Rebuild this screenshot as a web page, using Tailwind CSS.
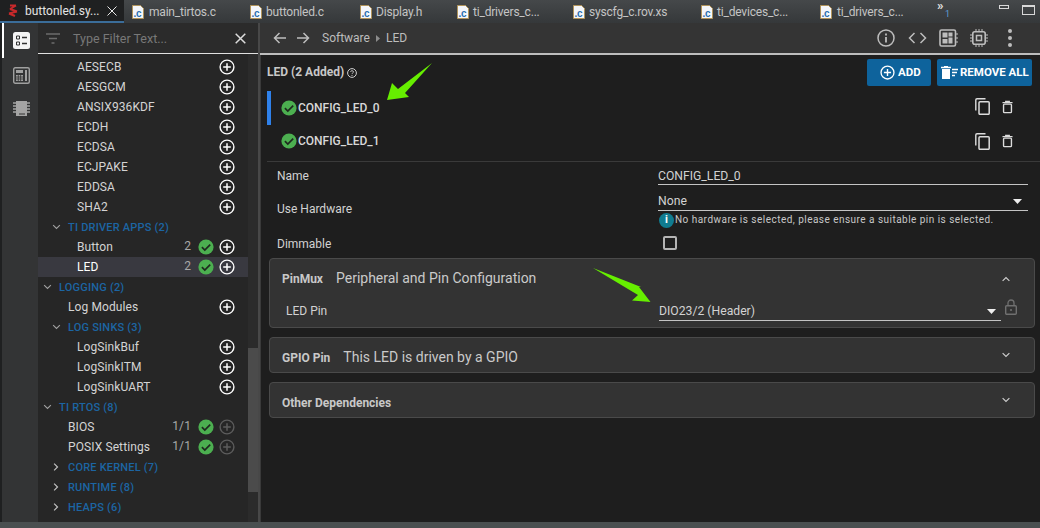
<!DOCTYPE html>
<html>

<head>
  <meta charset="UTF-8">
  <title>buttonled.syscfg</title>
  <script src="https://cdn.jsdelivr.net/npm/@tailwindcss/browser@4"></script>
</head>

<body class="w-[1040px] h-[528px] overflow-hidden bg-[#1e1e1e] font-['Roboto',sans-serif] text-[12px] text-[#d2d2d2] relative">
  <svg class="hidden">
    <symbol id="plus" viewBox="0 0 16 16">
      <circle cx="8" cy="8" r="6.9" fill="none" stroke="currentColor" stroke-width="1.4" />
      <path d="M8 4.2v7.6M4.2 8h7.6" fill="none" stroke="currentColor" stroke-width="1.5" />
    </symbol>
    <symbol id="ok" viewBox="0 0 16 16">
      <circle cx="8" cy="8" r="7.6" fill="#4caf50" />
      <path d="M3.9 8.2l2.9 2.9 5.4-5.4" fill="none" stroke="#1e2a1e" stroke-width="1.7" />
    </symbol>
    <symbol id="cfile" viewBox="0 0 12 14">
      <path d="M.5.5h8l3 3v10h-11z" fill="#f4f6fa" stroke="#b0935a" />
      <text x="1.5" y="11.5" font-size="10" font-weight="700" font-family="Liberation Sans" fill="#2a6fb0">.c</text>
    </symbol>
    <symbol id="copy" viewBox="0 0 15 17">
      <path d="M10.500 .8H2C1.300 .8 .8 1.300 .8 2V12.500" fill="none" stroke="currentColor" stroke-width="1.400" />
      <rect x="4" y="3.800" width="10.200" height="12.500" rx="1" fill="none" stroke="currentColor" stroke-width="1.500" />
    </symbol>
    <symbol id="trash" viewBox="0 0 12 14">
      <path d="M.5 2.2h11M4 2V.8h4V2" fill="none" stroke="currentColor" stroke-width="1.3" />
      <rect x="1.7" y="3.8" width="8.6" height="9.4" rx="1" fill="none" stroke="currentColor" stroke-width="1.5" />
    </symbol>
    <symbol id="down" viewBox="0 0 12 8">
      <path d="M1.5 1.5L6 6l4.5-4.5" fill="none" stroke="currentColor" stroke-width="1.5" />
    </symbol>
    <symbol id="right" viewBox="0 0 8 12">
      <path d="M1.5 1.5L6 6l-4.5 4.5" fill="none" stroke="currentColor" stroke-width="1.6" />
    </symbol>
  </svg>

  <!-- Editor tabs -->
  <div class="flex h-[23px] bg-gradient-to-b from-[#45484a] to-[#35383a] text-[#c4c4c4] tracking-[-.2px]">
    <div class="w-[124px] shrink-0 flex items-center pl-[7px] bg-[#1f2021] border-b-2 border-[#3b6d99] tracking-normal">
      <svg class="w-[12px] h-[13px] shrink-0" viewBox="0 0 12 13">
        <path d="M3 1.5h6M9 1.5L3 5M3 5l7 2.5M10 7.5L2 9.5M2 9.5l6 2.5" fill="none" stroke="#c8292b" stroke-width="2" />
      </svg>
      <span class="ml-[6px] w-[76px] whitespace-nowrap text-[#e4e4e4]">buttonled.sy...</span>
      <svg class="w-[10px] h-[10px] ml-[6px]" viewBox="0 0 10 10">
        <path d="M.5.5l9 9M9.5.5l-9 9" stroke="#e8e8e8" fill="none" />
      </svg>
    </div>
    <div class="w-[118px] shrink-0 flex items-center pl-[8px] gap-[5px]"><svg class="w-[12px] h-[14px] shrink-0"><use href="#cfile" /></svg>main_tirtos.c</div>
    <div class="w-[110px] shrink-0 flex items-center pl-[8px] gap-[4px]"><svg class="w-[12px] h-[14px] shrink-0"><use href="#cfile" /></svg>buttonled.c</div>
    <div class="w-[97px] shrink-0 flex items-center pl-[8px] gap-[4px]"><svg class="w-[12px] h-[14px] shrink-0"><use href="#cfile" /></svg>Display.h</div>
    <div class="w-[116px] shrink-0 flex items-center pl-[8px] gap-[4px]"><svg class="w-[12px] h-[14px] shrink-0"><use href="#cfile" /></svg>ti_drivers_c...</div>
    <div class="w-[128px] shrink-0 flex items-center pl-[8px] gap-[4px]"><svg class="w-[12px] h-[14px] shrink-0"><use href="#cfile" /></svg>syscfg_c.rov.xs</div>
    <div class="w-[119px] shrink-0 flex items-center pl-[8px] gap-[4px]"><svg class="w-[12px] h-[14px] shrink-0"><use href="#cfile" /></svg>ti_devices_c...</div>
    <div class="w-[125px] shrink-0 flex items-center pl-[8px] gap-[5px]"><svg class="w-[12px] h-[14px] shrink-0"><use href="#cfile" /></svg>ti_drivers_c...</div>
    <div class="w-[62px] shrink-0 relative">
      <span class="absolute left-0 top-0 text-[13px] leading-[12px] font-bold text-[#e0e0e0]">»</span>
      <span class="absolute left-[8px] top-[8px] text-[9px] leading-[12px] text-[#5b9bd5]">1</span>
    </div>
    <div class="flex items-start pt-[5px] gap-[13px]">
      <div class="w-[10px] h-[4px] border border-[#d8d8d8]"></div>
      <div class="w-[13px] h-[10px] border border-[#d8d8d8] border-t-2"></div>
    </div>
  </div>

  <div class="flex h-[499px]">
    <!-- Activity bar -->
    <div class="w-[38px] shrink-0 pl-[2px] bg-[#1f2021]">
      <div class="h-full bg-[#333435] flex flex-col relative">
        <div class="h-[35px] w-[2px] bg-white"></div>
        <svg class="absolute left-[11px] top-[9px] w-[17px] h-[17px]" viewBox="0 0 17 17">
          <rect width="17" height="17" rx="2.5" fill="#f4f4f4" />
          <path d="M3.5 4h3v3h-3zM3.5 10h3v3h-3z" fill="none" stroke="#333" />
          <path d="M9 5.5h5M9 11.5h5" stroke="#333" stroke-width="1.5" />
        </svg>
        <svg class="absolute left-[11px] top-[44px] w-[17px] h-[17px]" viewBox="0 0 17 17">
          <rect x=".7" y=".7" width="15.6" height="15.6" rx="1.5" fill="none" stroke="#a0a0a0" stroke-width="1.4" />
          <path d="M3 3h7v3H3zM3 8h7v6H3zM12 3h2v11h-2z" fill="#a0a0a0" />
          <path d="M5.3 8v6M7.6 8v6M3 10h7M3 12h7" stroke="#333" stroke-width=".8" />
        </svg>
        <svg class="absolute left-[11px] top-[77px] w-[17px] h-[17px]" viewBox="0 0 17 17">
          <path d="M3 1h11v15H3z" fill="#a4a4a4" />
          <path d="M0 3h3M0 6h3M0 9h3M0 12h3M14 3h3M14 6h3M14 9h3M14 12h3" stroke="#a4a4a4" stroke-width="1.4" />
          <path d="M7 13v2M9 13v2M11 13v2" stroke="#333" />
        </svg>
      </div>
    </div>

    <!-- Sidebar -->
    <div class="w-[220px] shrink-0 flex flex-col bg-[#262626]">
      <div class="h-[31px] shrink-0 flex items-center bg-[#2b2b2b] border-b border-[#e0e0e0] pl-[8px] pr-[12px]">
        <svg class="w-[14px] h-[11px] shrink-0" viewBox="0 0 14 11">
          <path d="M0 1h14M3 5.500h8M5.500 10h3" stroke="#6c6c6c" stroke-width="1.4" fill="none" />
        </svg>
        <span class="ml-[13px] mt-[2px] text-[12.500px] text-[#787878]">Type Filter Text...</span>
        <svg class="ml-auto w-[11px] h-[11px]" viewBox="0 0 11 11">
          <path d="M.7.7l9.600 9.600M10.300.7l-9.600 9.600" stroke="#dcdcdc" stroke-width="1.500" fill="none" />
        </svg>
      </div>
      <div class="flex-1 flex min-h-0">
        <div class="w-[210px] overflow-hidden pt-[3px] text-[#d4d4d4] tracking-[.1px]">
          <div class="h-5 flex items-center pl-[39px] pr-[13px]"><span>AESECB</span><svg class="ml-auto w-[16px] h-[16px] text-white"><use href="#plus" /></svg></div>
          <div class="h-5 flex items-center pl-[39px] pr-[13px]"><span>AESGCM</span><svg class="ml-auto w-[16px] h-[16px] text-white"><use href="#plus" /></svg></div>
          <div class="h-5 flex items-center pl-[39px] pr-[13px]"><span>ANSIX936KDF</span><svg class="ml-auto w-[16px] h-[16px] text-white"><use href="#plus" /></svg></div>
          <div class="h-5 flex items-center pl-[39px] pr-[13px]"><span>ECDH</span><svg class="ml-auto w-[16px] h-[16px] text-white"><use href="#plus" /></svg></div>
          <div class="h-5 flex items-center pl-[39px] pr-[13px]"><span>ECDSA</span><svg class="ml-auto w-[16px] h-[16px] text-white"><use href="#plus" /></svg></div>
          <div class="h-5 flex items-center pl-[39px] pr-[13px]"><span>ECJPAKE</span><svg class="ml-auto w-[16px] h-[16px] text-white"><use href="#plus" /></svg></div>
          <div class="h-5 flex items-center pl-[39px] pr-[13px]"><span>EDDSA</span><svg class="ml-auto w-[16px] h-[16px] text-white"><use href="#plus" /></svg></div>
          <div class="h-5 flex items-center pl-[39px] pr-[13px]"><span>SHA2</span><svg class="ml-auto w-[16px] h-[16px] text-white"><use href="#plus" /></svg></div>

          <div class="h-5 flex items-center pl-[14px] font-medium text-[11px] tracking-[.2px] text-[#1c65a3]"><svg class="w-[9px] h-[6px] mr-[7px] text-[#a0a0a0]"><use href="#down" /></svg><span class="mt-[2px]">TI DRIVER APPS (2)</span></div>
          <div class="h-5 flex items-center pl-[39px] pr-[13px]"><span>Button</span><span class="ml-auto text-[#a8a8a8] -mt-[2px]">2</span><svg class="ml-[7px] w-[16px] h-[16px]"><use href="#ok" /></svg><svg class="ml-[5px] w-[16px] h-[16px] text-white"><use href="#plus" /></svg></div>
          <div class="h-5 flex items-center pl-[39px] pr-[13px] bg-[#393940] text-white"><span>LED</span><span class="ml-auto text-[#a8a8a8] -mt-[2px]">2</span><svg class="ml-[7px] w-[16px] h-[16px]"><use href="#ok" /></svg><svg class="ml-[5px] w-[16px] h-[16px] text-white"><use href="#plus" /></svg></div>

          <div class="h-5 flex items-center pl-[5px] font-medium text-[11px] tracking-[.2px] text-[#1c65a3]"><svg class="w-[9px] h-[6px] mr-[7px] text-[#a0a0a0]"><use href="#down" /></svg><span class="mt-[2px]">LOGGING (2)</span></div>
          <div class="h-5 flex items-center pl-[30px] pr-[13px]"><span>Log Modules</span><svg class="ml-auto w-[16px] h-[16px] text-white"><use href="#plus" /></svg></div>
          <div class="h-5 flex items-center pl-[14px] font-medium text-[11px] tracking-[.2px] text-[#1c65a3]"><svg class="w-[9px] h-[6px] mr-[7px] text-[#a0a0a0]"><use href="#down" /></svg><span class="mt-[2px]">LOG SINKS (3)</span></div>
          <div class="h-5 flex items-center pl-[39px] pr-[13px]"><span>LogSinkBuf</span><svg class="ml-auto w-[16px] h-[16px] text-white"><use href="#plus" /></svg></div>
          <div class="h-5 flex items-center pl-[39px] pr-[13px]"><span>LogSinkITM</span><svg class="ml-auto w-[16px] h-[16px] text-white"><use href="#plus" /></svg></div>
          <div class="h-5 flex items-center pl-[39px] pr-[13px]"><span>LogSinkUART</span><svg class="ml-auto w-[16px] h-[16px] text-white"><use href="#plus" /></svg></div>

          <div class="h-5 flex items-center pl-[5px] font-medium text-[11px] tracking-[.2px] text-[#1c65a3]"><svg class="w-[9px] h-[6px] mr-[7px] text-[#a0a0a0]"><use href="#down" /></svg><span class="mt-[2px]">TI RTOS (8)</span></div>
          <div class="h-5 flex items-center pl-[30px] pr-[13px]"><span>BIOS</span><span class="ml-auto text-[#a8a8a8] -mt-[2px]">1/1</span><svg class="ml-[7px] w-[16px] h-[16px]"><use href="#ok" /></svg><svg class="ml-[5px] w-[16px] h-[16px] text-[#5c5c5c]"><use href="#plus" /></svg></div>
          <div class="h-5 flex items-center pl-[30px] pr-[13px]"><span>POSIX Settings</span><span class="ml-auto text-[#a8a8a8] -mt-[2px]">1/1</span><svg class="ml-[7px] w-[16px] h-[16px]"><use href="#ok" /></svg><svg class="ml-[5px] w-[16px] h-[16px] text-[#5c5c5c]"><use href="#plus" /></svg></div>
          <div class="h-5 flex items-center pl-[15px] font-medium text-[11px] tracking-[.2px] text-[#1c65a3]"><svg class="w-[6px] h-[10px] mr-[9px] text-[#c0c0c0]"><use href="#right" /></svg><span class="mt-[2px]">CORE KERNEL (7)</span></div>
          <div class="h-5 flex items-center pl-[15px] font-medium text-[11px] tracking-[.2px] text-[#1c65a3]"><svg class="w-[6px] h-[10px] mr-[9px] text-[#c0c0c0]"><use href="#right" /></svg><span class="mt-[2px]">RUNTIME (8)</span></div>
          <div class="h-5 flex items-center pl-[15px] font-medium text-[11px] tracking-[.2px] text-[#1c65a3]"><svg class="w-[6px] h-[10px] mr-[9px] text-[#c0c0c0]"><use href="#right" /></svg><span class="mt-[2px]">HEAPS (6)</span></div>
        </div>
        <!-- Scrollbar -->
        <div class="w-[10px] bg-[#2b2b2b] pt-[294px]">
          <div class="h-[144px] bg-[#4b4b4b]"></div>
        </div>
      </div>
    </div>

    <div class="w-[2px] shrink-0 bg-[#484848]"></div>

    <!-- Main panel -->
    <div class="flex-1 min-w-0 flex flex-col">
      <div class="h-[32px] shrink-0 flex items-center bg-[#343434] border-b-2 border-[#bdbdbd] pl-[13px] text-[#bdbdbd]">
        <svg class="w-[13px] h-[12px]" viewBox="0 0 13 12"><path d="M6.500 1L1.500 6l5 5M1.500 6H13" fill="none" stroke="currentColor" stroke-width="1.500" /></svg>
        <svg class="ml-[11px] w-[13px] h-[12px]" viewBox="0 0 13 12"><path d="M6.500 1l5 5-5 5M11.500 6H0" fill="none" stroke="currentColor" stroke-width="1.500" /></svg>
        <span class="ml-[12px]">Software</span>
        <svg class="mx-[6px] w-[4px] h-[7px]" viewBox="0 0 4 7"><path d="M0 0l4 3.500L0 7z" fill="#8c8c8c" /></svg>
        <span>LED</span>
        <svg class="ml-auto w-[18px] h-[18px]" viewBox="0 0 18 18"><circle cx="9" cy="9" r="8" fill="none" stroke="currentColor" stroke-width="1.500" /><path d="M9 8v5.500M9 4.500v2" stroke="currentColor" stroke-width="1.800" /></svg>
        <svg class="ml-[13px] w-[19px] h-[12px]" viewBox="0 0 19 12"><path d="M6.500 1L1.500 6l5 5M12.500 1l5 5-5 5" fill="none" stroke="currentColor" stroke-width="1.500" /></svg>
        <svg class="ml-[12px] w-[19px] h-[18px]" viewBox="0 0 19 18"><rect x="1" y="1" width="15.500" height="16" rx="1.500" fill="none" stroke="currentColor" stroke-width="1.600" /><path d="M3.500 3.500h5v5h-5zM9.500 3.500h4v4h-4zM3.500 10h5v4.500h-5zM9.500 8.500h4v6h-4z" fill="currentColor" /><path d="M18 4v2M18 8v2M18 12v2" stroke="currentColor" /></svg>
        <svg class="ml-[12px] w-[18px] h-[18px]" viewBox="0 0 18 18"><rect x="2.800" y="2.800" width="12.400" height="12.400" rx="2" fill="none" stroke="currentColor" stroke-width="1.600" /><rect x="6.500" y="6.500" width="5" height="5" fill="none" stroke="currentColor" stroke-width="1.500" /><path d="M6 0v2.500M9 0v2.500M12 0v2.500M6 15.500V18M9 15.500V18M12 15.500V18M0 6h2.500M0 9h2.500M0 12h2.500M15.500 6H18M15.500 9H18M15.500 12H18" stroke="currentColor" /></svg>
        <div class="ml-[20px] mr-[28px] flex flex-col gap-[3px]">
          <div class="w-[4px] h-[4px] rounded-full bg-[#bdbdbd]"></div>
          <div class="w-[4px] h-[4px] rounded-full bg-[#bdbdbd]"></div>
          <div class="w-[4px] h-[4px] rounded-full bg-[#bdbdbd]"></div>
        </div>
      </div>

      <div class="flex-1 min-h-0 flex flex-col border-l border-[#3a3a3a] pb-[6px]">
        <!-- Heading and buttons -->
        <div class="h-[36px] shrink-0 flex items-start pt-[4px] pl-[6px] pr-[8px]">
          <span class="mt-[4px] font-bold text-[#c8c8c8]">LED (2 Added)</span>
          <svg class="ml-[3px] mt-[9px] w-[10px] h-[10px]" viewBox="0 0 10 10"><circle cx="5" cy="5" r="4.400" fill="none" stroke="#d0d0d0" /><path d="M3.500 3.800C3.700 2.300 6.500 2.300 6.500 3.900c0 1-1.500 1-1.500 2.200M5 7v1" fill="none" stroke="#d0d0d0" stroke-width=".9" /></svg>
          <div class="ml-auto w-[64px] h-[27px] rounded-[2px] bg-[#0e639c] flex items-center pl-[13px] font-bold text-[11.500px] text-white">
            <svg class="w-[15px] h-[15px]"><use href="#plus" /></svg><span class="ml-[3px]">ADD</span>
          </div>
          <div class="ml-[6px] w-[95px] h-[27px] rounded-[2px] bg-[#0e639c] flex items-center pl-[4px] font-bold text-[11.500px] text-white">
            <svg class="w-[18px] h-[13px] shrink-0" viewBox="0 0 18 13"><path d="M0 1.500h10M3 .5h4" stroke="#fff" stroke-width="1.400" /><path d="M1 3h8v10H1z" fill="#fff" /><path d="M11 3.500h6M11 6.500h5M11 9.500h3" stroke="#fff" stroke-width="1.300" /></svg>
            <span class="ml-[1px] whitespace-nowrap">REMOVE ALL</span>
          </div>
        </div>

        <!-- Instance list -->
        <div class="h-[34px] shrink-0 flex items-center ml-[6px] pr-[27px] border-l-4 border-[#2f81ea] font-medium text-[#d8d8d8]">
          <svg class="ml-[10px] w-[16px] h-[16px]"><use href="#ok" /></svg><span class="ml-[1px]">CONFIG_LED_0</span>
          <svg class="ml-auto -mt-[3px] w-[15px] h-[17px] text-[#dcdcdc]"><use href="#copy" /></svg><svg class="ml-[12px] -mt-[3px] w-[11px] h-[14px] text-[#dcdcdc]"><use href="#trash" /></svg>
        </div>
        <div class="h-[32px] shrink-0 flex items-center ml-[6px] pl-[4px] pr-[27px] font-medium text-[#d8d8d8]">
          <svg class="ml-[10px] w-[16px] h-[16px]"><use href="#ok" /></svg><span class="ml-[1px]">CONFIG_LED_1</span>
          <svg class="ml-auto w-[15px] h-[17px] text-[#dcdcdc]"><use href="#copy" /></svg><svg class="ml-[12px] w-[11px] h-[14px] text-[#dcdcdc]"><use href="#trash" /></svg>
        </div>
        <div class="h-[5px] shrink-0 ml-[6px] border-b border-[#3a3a3a]"></div>

        <!-- Form -->
        <div class="pl-[16px] pr-[12px] h-[23px] mt-[1px] shrink-0 grid grid-cols-[381px_370px]">
          <div class="pt-[4px]">Name</div>
          <div class="border-b border-[#c4c4c4] pt-[6px] text-[12.200px] leading-[15px] h-[22px]">CONFIG_LED_0</div>
        </div>
        <div class="pl-[16px] pr-[12px] h-[45px] shrink-0 grid grid-cols-[381px_370px]">
          <div class="pt-[15px] leading-[16px]">Use Hardware</div>
          <div>
            <div class="h-[25px] flex items-center border-b border-[#c4c4c4] pt-[6px] text-[12.200px]">None<svg class="ml-auto mr-[6px] w-[9px] h-[5px]" viewBox="0 0 9 5"><path d="M0 0h9L4.500 5z" fill="#eee" /></svg></div>
            <div class="flex items-center mt-[1px] pl-[1px] h-[16px]">
              <div class="w-[15px] h-[15px] shrink-0 rounded-full bg-[#107c90] text-white text-[11px] font-bold flex items-center justify-center">i</div>
              <span class="text-[10px] leading-[14px] tracking-[.47px] whitespace-nowrap text-[#c8c8c8] ml-[1px]">No hardware is selected, please ensure a suitable pin is selected.</span>
            </div>
          </div>
        </div>
        <div class="pl-[16px] pr-[12px] h-[27px] shrink-0 grid grid-cols-[381px_370px]">
          <div class="pt-[4px]">Dimmable</div>
          <div class="pl-[5px] pt-[5px]"><div class="w-[14px] h-[14px] rounded-[2px] border-2 border-[#b4b4b4]"></div></div>
        </div>

        <!-- PinMux panel -->
        <div class="ml-[8px] mr-[5px] h-[70px] shrink-0 rounded-[4px] border border-[#4a4a4a] bg-[#333333] relative">
          <div class="h-[39px] flex items-center pl-[12px] pr-[23px]">
            <span class="font-bold text-[#c8c8c8]">PinMux</span><span class="ml-[13px] text-[14px] text-[#cacaca]">Peripheral and Pin Configuration</span>
            <svg class="ml-auto w-[10px] h-[6px] rotate-180 text-[#d0d0d0]"><use href="#down" /></svg>
          </div>
          <div class="flex pl-[16px] h-[24px] mt-[2px]">
            <div class="w-[373px] pt-[1px] leading-[20px]">LED Pin</div>
            <div class="w-[342px] h-[21px] pt-[2px] flex items-center border-b border-[#c4c4c4] text-[12.200px]">DIO23/2 (Header)<svg class="ml-auto mr-[5px] w-[9px] h-[5px]" viewBox="0 0 9 5"><path d="M0 0h9L4.500 5z" fill="#eee" /></svg></div>
            <svg class="ml-[4px] -mt-[1px] w-[12px] h-[16px]" viewBox="0 0 12 16"><path d="M3 7V4a3 3 0 0 1 6 0v3" fill="none" stroke="#707070" stroke-width="1.300" /><rect x=".7" y="6.700" width="10.600" height="8.600" rx="1" fill="none" stroke="#707070" stroke-width="1.400" /><circle cx="6" cy="11" r="1.100" fill="#707070" /></svg>
          </div>
        </div>

        <div class="ml-[8px] mr-[5px] mt-[9px] h-[36px] shrink-0 rounded-[4px] border border-[#4a4a4a] bg-[#333333] flex items-center pl-[12px] pr-[23px]">
          <span class="mt-[5px] font-bold text-[#c8c8c8]">GPIO Pin</span><span class="mt-[5px] ml-[13px] text-[14px] text-[#cacaca]">This LED is driven by a GPIO</span>
          <svg class="ml-auto w-[10px] h-[6px] text-[#d0d0d0]"><use href="#down" /></svg>
        </div>
        <div class="ml-[8px] mr-[5px] mt-[9px] h-[36px] shrink-0 rounded-[4px] border border-[#4a4a4a] bg-[#333333] flex items-center pl-[12px] pr-[23px]">
          <span class="mt-[5px] font-bold text-[#c8c8c8]">Other Dependencies</span>
          <svg class="ml-auto w-[10px] h-[6px] text-[#d0d0d0]"><use href="#down" /></svg>
        </div>
      </div>
    </div>
  </div>

  <!-- Bottom strip -->
  <div class="h-[6px] bg-[#4a4f50]"></div>

  <!-- Annotation arrows drawn over the screenshot -->
  <svg class="absolute left-0 top-0 w-[1040px] h-[528px] pointer-events-none" viewBox="0 0 1040 528">
    <path d="M387 100L392 83L398 89L432 63L405 93L409 97z" fill="#66ee00" />
    <path d="M593 268L641 287L639 287L650.500 302L632 300.500L638 295z" fill="#66ee00" />
  </svg>
</body>

</html>
